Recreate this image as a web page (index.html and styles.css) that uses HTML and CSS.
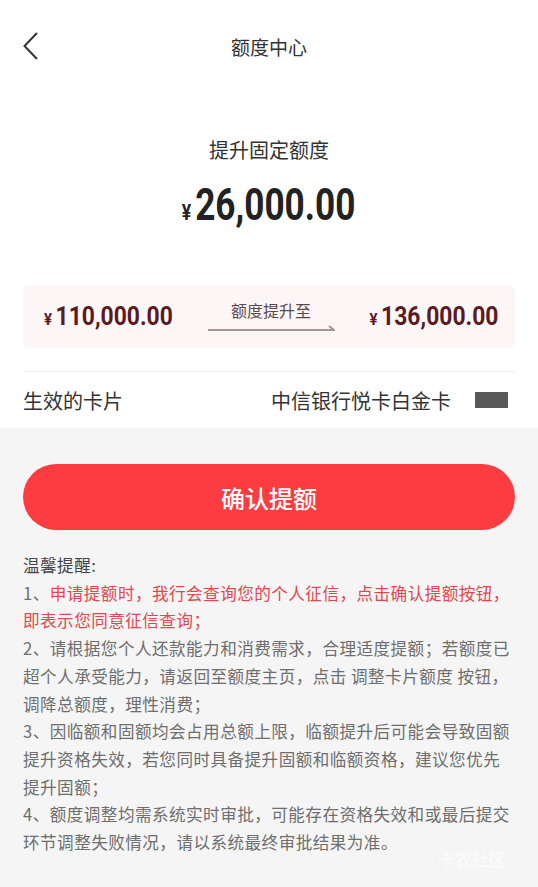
FILE: index.html
```html
<!DOCTYPE html>
<html lang="zh-CN">
<head>
    <meta charset="UTF-8">
    <meta name="viewport" content="width=device-width, initial-scale=1.0">
    <title>额度中心</title>
    <link rel="stylesheet" href="styles.css">
</head>
<body>
    <div class="top">
        <header class="nav">
            <a class="back" href="#">
                <svg width="16" height="28" viewBox="0 0 16 28"><path d="M14 1 L1.5 14 L14 27" fill="none" stroke="#333" stroke-width="2"/></svg>
            </a>
            <h1>额度中心</h1>
        </header>

        <div class="raise-title">提升固定额度</div>
        <div class="raise-amount"><span class="num"><span class="yen">¥</span>26,000.00</span></div>

        <div class="compare">
            <div class="money left"><span class="num"><span class="yen">¥</span>110,000.00</span></div>
            <div class="middle">
                <span>额度提升至</span>
                <svg width="127" height="8" viewBox="0 0 127 8"><path d="M0 6 H126 L121 2" fill="none" stroke="#a3959a" stroke-width="2"/></svg>
            </div>
            <div class="money right"><span class="num"><span class="yen">¥</span>136,000.00</span></div>
        </div>

        <div class="card-row">
            <span>生效的卡片</span>
            <div class="card-name">
                <span>中信银行悦卡白金卡</span>
                <i class="mask"></i>
            </div>
        </div>
    </div>

    <div class="bottom">
        <button class="btn">确认提额</button>

        <div class="tips">
            <p>温馨提醒:</p>
            <p>1、<span class="red">申请提额时，我行会查询您的个人征信，点击确认提额按钮，即表示您同意征信查询；</span></p>
            <p>2、请根据您个人还款能力和消费需求，合理适度提额；若额度已超个人承受能力，请返回至额度主页，点击 调整卡片额度 按钮，调降总额度，理性消费；</p>
            <p>3、因临额和固额均会占用总额上限，临额提升后可能会导致固额提升资格失效，若您同时具备提升固额和临额资格，建议您优先提升固额；</p>
            <p>4、额度调整均需系统实时审批，可能存在资格失效和或最后提交环节调整失败情况，请以系统最终审批结果为准。</p>
        </div>

        <div class="watermark">卡农社区</div>
    </div>
</body>
</html>
```

FILE: styles.css
```css
* {
    box-sizing: border-box;
}
html, body {
    height: 100%;
}
body {
    margin: 0;
    font-family: "Noto Sans CJK SC", "Noto Sans", sans-serif;
    color: #333;
    background: #f5f5f5;
    display: flex;
    flex-direction: column;
}
.top {
    background: white;
    padding: 0 23px;
}
.nav {
    height: 92px;
    display: flex;
    align-items: center;
    justify-content: center;
    position: relative;
}
.nav h1 {
    margin: 0;
    font-size: 19px;
    font-weight: normal;
    color: #333;
}
.back {
    position: absolute;
    left: 0;
    top: 32px;
    display: flex;
}
.raise-title {
    margin-top: 40px;
    text-align: center;
    font-size: 20px;
    line-height: 36px;
}
.num {
    display: inline-block;
    font-family: Roboto, "Liberation Sans", sans-serif;
    font-weight: bold;
}
.raise-amount {
    margin-top: 5px;
    height: 56px;
    text-align: center;
    font-size: 44px;
    line-height: 56px;
    color: #222;
}
.raise-amount .num {
    transform: scaleX(0.8);
}
.raise-amount .yen {
    font-size: 22px;
    margin-right: 5px;
}
.compare {
    margin-top: 56px;
    height: 63px;
    background: #fdf6f6;
    border-radius: 6px;
    display: flex;
    align-items: center;
    justify-content: space-between;
    padding: 0 17px 0 21px;
}
.money {
    font-size: 26px;
    line-height: 32px;
    color: #5a1a22;
}
.money .num {
    transform: scaleX(0.88);
}
.money.left .num {
    transform-origin: left center;
}
.money.right .num {
    transform-origin: right center;
}
.money .yen {
    font-size: 17px;
    margin-right: 4px;
}
.middle {
    display: flex;
    flex-direction: column;
    align-items: center;
    font-size: 16px;
    color: #5b4a4d;
    line-height: 24px;
    margin-top: -4px;
}
.middle svg {
    display: block;
    margin-top: 2px;
}
.card-row {
    margin-top: 23px;
    border-top: 1px solid #f0f0f0;
    height: 57px;
    display: flex;
    align-items: center;
    justify-content: space-between;
    font-size: 20px;
}
.card-name {
    display: flex;
    align-items: center;
    margin-right: 7px;
}
.mask {
    display: block;
    width: 33px;
    height: 16px;
    background: #595959;
    margin-left: 24px;
}
.bottom {
    flex: 1;
    padding: 36px 23px 0;
    position: relative;
}
.btn {
    display: block;
    width: 100%;
    height: 66px;
    border: none;
    border-radius: 33px;
    background: #fc3c40;
    color: white;
    font-family: inherit;
    font-size: 24px;
    font-weight: 500;
}
.tips {
    margin-top: 22px;
    font-size: 16.6px;
    letter-spacing: 0.45px;
    line-height: 27.7px;
    color: #6e6e6e;
}
.tips p {
    margin: 0;
}
.tips p:first-child {
    color: #444;
}
.red {
    color: #e3474d;
}
.watermark {
    position: absolute;
    right: 32px;
    bottom: 16px;
    font-size: 17px;
    color: rgba(255, 255, 255, 0.85);
}
```
